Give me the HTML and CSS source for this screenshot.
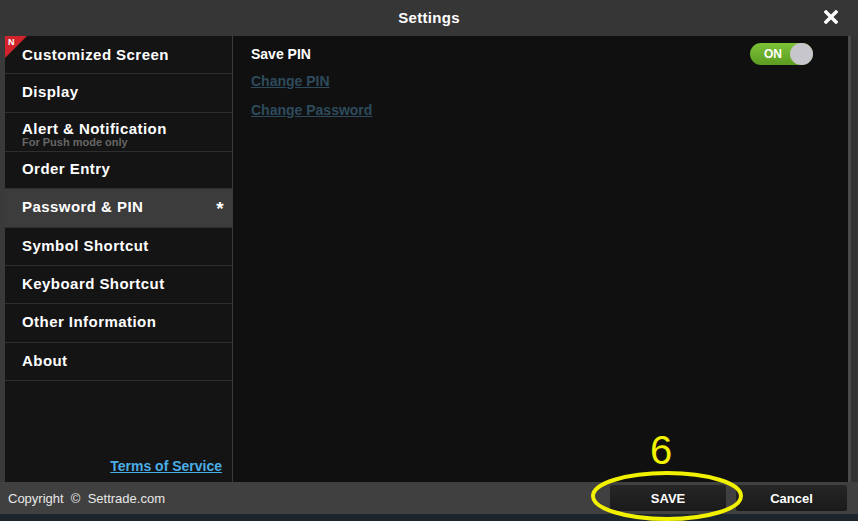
FILE: index.html
```html
<!DOCTYPE html>
<html>
<head>
<meta charset="utf-8">
<link rel="stylesheet" href="styles.css">
</head>
<body>
<div class="page">
  <div class="dialog">
    <div class="titlebar">
      <span class="title">Settings</span>
      <svg class="close" width="14" height="14" viewBox="0 0 14 14"><path d="M2 2 L12 12 M12 2 L2 12" stroke="#fff" stroke-width="3.4" stroke-linecap="square"/></svg>
    </div>
    <div class="main">
      <div class="sidebar">
        <ul class="menu">
          <li class="item first"><span class="badge-new"><span class="n">N</span></span>Customized Screen</li>
          <li class="item tall">Display</li>
          <li class="item tall two"><span>Alert &amp; Notification</span><span class="sub">For Push mode only</span></li>
          <li class="item short">Order Entry</li>
          <li class="item tall active">Password &amp; PIN<span class="star">*</span></li>
          <li class="item">Symbol Shortcut</li>
          <li class="item">Keyboard Shortcut</li>
          <li class="item tall">Other Information</li>
          <li class="item">About</li>
        </ul>
        <div class="terms"><a href="#">Terms of Service</a></div>
      </div>
      <div class="content">
        <div class="row">
          <span class="label">Save PIN</span>
          <span class="toggle"><span class="on">ON</span><span class="knob"></span></span>
        </div>
        <a class="link" href="#">Change PIN</a>
        <a class="link" href="#">Change Password</a>
      </div>
      <div class="rightframe"></div>
    </div>
    <div class="footer">
      <span class="copy">Copyright &nbsp;©&nbsp; Settrade.com</span>
      <div class="buttons">
        <button class="btn save">SAVE</button>
        <button class="btn cancel">Cancel</button>
      </div>
    </div>
  </div>
  <div class="under"></div>
  <span class="anno-num">6</span>
  <svg class="anno-ring" width="154" height="52" viewBox="0 0 154 52"><ellipse cx="77" cy="26" rx="74" ry="23" fill="none" stroke="#f2f200" stroke-width="4"/></svg>
</div>
</body>
</html>
```

FILE: styles.css
```css
* { box-sizing: border-box; }
html, body { margin: 0; padding: 0; }
body {
  width: 858px;
  height: 521px;
  overflow: hidden;
  background: #1b2126;
  font-family: "Liberation Sans", Arial, sans-serif;
}
.page { position: relative; width: 858px; height: 521px; }
.dialog {
  width: 858px;
  height: 514px;
  display: flex;
  flex-direction: column;
  background: #3a3a3a;
}
.titlebar {
  height: 36px;
  display: flex;
  align-items: center;
  justify-content: center;
  position: relative;
  background: #363636;
  padding-bottom: 2px;
}
.title { color: #fff; font-weight: bold; font-size: 15px; letter-spacing: 0.3px; }
.close { position: absolute; right: 20px; top: 10px; }
.main {
  display: flex;
  height: 446px;
  padding-left: 5px;
}
.sidebar {
  width: 228px;
  background: #141414;
  border-right: 1px solid #3a3a3a;
  display: flex;
  flex-direction: column;
  justify-content: space-between;
  padding-bottom: 7px;
}
.menu { list-style: none; margin: 0; padding: 0; }
.item {
  position: relative;
  height: 38px;
  display: flex;
  align-items: center;
  padding-left: 17px;
  padding-right: 8px;
  padding-bottom: 3px;
  color: #fff;
  font-weight: bold;
  font-size: 15px;
  letter-spacing: 0.45px;
  border-bottom: 1px solid #2e2e2e;
}
.item.first { padding-bottom: 0; }
.item.tall { height: 39px; }
.item.short { height: 37px; }
.item.two { flex-direction: column; align-items: flex-start; justify-content: center; padding-top: 4px; padding-bottom: 0; }
.item .sub { font-size: 11px; color: #666; font-weight: bold; line-height: 11px; letter-spacing: 0; }
.item.two span:first-child { line-height: 16px; }
.item.active { background: #3c3c3c; justify-content: space-between; }
.star { font-size: 19px; margin-top: 5px; }
.badge-new {
  position: absolute;
  left: 0; top: 0;
  width: 0; height: 0;
  border-top: 22px solid #d0232b;
  border-right: 22px solid transparent;
}
.badge-new .n {
  position: absolute;
  left: 3px; top: -21px;
  color: #fff;
  font-size: 9px;
  font-weight: bold;
  letter-spacing: 0;
}
.terms { text-align: right; padding-right: 10px; }
.terms a { color: #4aaee6; font-weight: bold; font-size: 14px; }
.content {
  flex: 1;
  background: #101010;
  padding: 7px 34px 0 18px;
  display: flex;
  flex-direction: column;
}
.row { display: flex; justify-content: space-between; align-items: center; height: 22px; }
.label { color: #fff; font-weight: bold; font-size: 14px; }
.toggle {
  width: 63px; height: 22px;
  border-radius: 11px;
  background: linear-gradient(#7cc236, #5c9c22);
  display: flex;
  align-items: center;
  justify-content: space-between;
  padding-left: 14px;
  margin-right: 1px;
}
.on { color: #fff; font-weight: bold; font-size: 12px; }
.knob { width: 23px; height: 22px; border-radius: 50%; background: #c6c6cc; }
.link {
  color: #2d4b5c;
  font-size: 14px;
  font-weight: bold;
  margin-top: 5px;
  line-height: 22px;
  align-self: flex-start;
}
.link + .link { margin-top: 7px; }
.rightframe { width: 10px; background: #333; border-left: 3px solid #4a4a4a; }
.footer {
  flex: 1;
  display: flex;
  align-items: center;
  justify-content: space-between;
  padding: 0 11px 0 8px;
  background: #404040;
}
.copy { color: #e8e8e8; font-size: 13px; }
.buttons { display: flex; gap: 10px; }
.btn {
  height: 26px;
  border: none;
  border-radius: 2px;
  color: #fff;
  font-family: "Liberation Sans", Arial, sans-serif;
  font-weight: bold;
  font-size: 13px;
  background: linear-gradient(#262626, #1a1a1a);
}
.save { width: 116px; }
.cancel { width: 111px; }
.under { height: 7px; background: #1c252b; }
.anno-num {
  position: absolute;
  left: 650px; top: 428px;
  color: #f2f200;
  font-size: 40px;
  font-family: "Liberation Sans", Arial, sans-serif;
}
.anno-ring { position: absolute; left: 590px; top: 470px; }
```
